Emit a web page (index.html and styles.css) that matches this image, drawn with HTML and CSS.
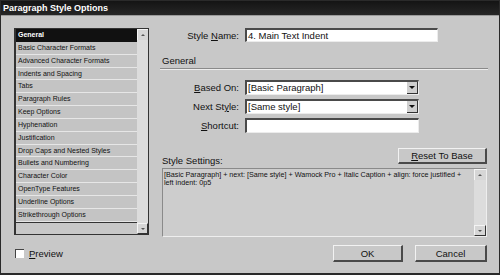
FILE: index.html
```html
<!DOCTYPE html>
<html lang="en">
  <head>
    <meta charset="UTF-8" />
    <title>Paragraph Style Options</title>
    <link rel="stylesheet" href="styles.css">
  </head>
  <body>
    <div class="window">
      <div class="titlebar">Paragraph Style Options</div>

      <div class="dialog">
        <div class="sidebar">
          <div class="listbox">
            <ul class="categories">
              <li class="selected">General</li>
              <li>Basic Character Formats</li>
              <li>Advanced Character Formats</li>
              <li>Indents and Spacing</li>
              <li>Tabs</li>
              <li>Paragraph Rules</li>
              <li>Keep Options</li>
              <li>Hyphenation</li>
              <li>Justification</li>
              <li>Drop Caps and Nested Styles</li>
              <li>Bullets and Numbering</li>
              <li>Character Color</li>
              <li>OpenType Features</li>
              <li>Underline Options</li>
              <li>Strikethrough Options</li>
            </ul>
            <div class="scrollbar">
              <span class="arrow up"></span>
              <span class="track"></span>
              <span class="arrow down"></span>
            </div>
          </div>

          <label class="preview">
            <span class="checkbox"></span>
            <span><u>P</u>review</span>
          </label>
        </div>

        <div class="panel">
          <div class="fields name-row">
            <label>Style <u>N</u>ame:</label>
            <div class="field name-field">4. Main Text Indent</div>
          </div>

          <div class="section">General</div>

          <div class="fields">
            <label><u>B</u>ased On:</label>
            <div class="field select">
              <span class="value">[Basic Paragraph]</span>
              <span class="drop"></span>
            </div>

            <label>Next St<u>y</u>le:</label>
            <div class="field select">
              <span class="value">[Same style]</span>
              <span class="drop"></span>
            </div>

            <label><u>S</u>hortcut:</label>
            <div class="field shortcut"></div>
          </div>

          <div class="settings-head">
            <span class="settings-label">Style Settings:</span>
            <button class="btn reset"><u>R</u>eset To Base</button>
          </div>

          <div class="settings-box">
            <p class="settings-text">[Basic Paragraph] + next: [Same style] + Wamock Pro + Italic Caption + align: force justified +<br>left indent: 0p5</p>
            <div class="scrollbar">
              <span class="arrow up"></span>
              <span class="track"></span>
              <span class="arrow down"></span>
            </div>
          </div>

          <div class="actions">
            <button class="btn ok">OK</button>
            <button class="btn cancel">Cancel</button>
          </div>
        </div>
      </div>
    </div>
  </body>
</html>
```

FILE: styles.css
```css
:root {
  --face: #c8c8c8;
  --dark: #1a1a1a;
  --shadow: #4a4a4a;
  --light: #ececec;
}

* {
  box-sizing: border-box;
}

body {
  margin: 0;
  background: var(--face);
  font-family: "Liberation Sans", Arial, sans-serif;
  color: #111;
}

.window {
  width: 500px;
  height: 275px;
  border: 1px solid #2a2a2a;
  border-bottom-width: 2px;
  background: var(--face);
}

.titlebar {
  height: 15px;
  padding-left: 2px;
  background: linear-gradient(#141414, #262626);
  color: #fff;
  font-weight: bold;
  font-size: 9px;
  line-height: 15px;
  border-bottom: 1px solid #9a9a9a;
}

.dialog {
  display: flex;
  gap: 11px;
  padding: 12px 0 0 13px;
}

/* left column */

.sidebar {
  width: 135px;
}

.listbox {
  display: flex;
  height: 207px;
  border: 1px solid #333;
  border-left-width: 2px;
  background: var(--face);
}

.categories {
  flex: 1;
  margin: 0;
  padding: 0;
  list-style: none;
  align-self: flex-start;
  border-bottom: 1px solid #333;
}

.categories li {
  height: 12.857px;
  padding-left: 2px;
  background: #c4c4c4;
  border-bottom: 1px solid #e6e6e6;
  font-size: 7px;
  line-height: 12px;
  white-space: nowrap;
}

.categories li.selected {
  background: #111;
  color: #fff;
  font-weight: bold;
  border-bottom-color: #111;
}

.scrollbar {
  display: flex;
  flex-direction: column;
  width: 11px;
  background: #dcdcdc;
}

.scrollbar .track {
  flex: 1;
}

.arrow {
  position: relative;
  height: 11px;
  background: #d6d6d6;
  border-top: 1px solid #f4f4f4;
  border-left: 1px solid #f4f4f4;
}

.arrow.down {
  border-right: 1px solid #333;
  border-bottom: 1px solid #333;
}

.arrow::after {
  content: "";
  position: absolute;
  left: 3px;
  top: 4px;
  border-left: 2px solid transparent;
  border-right: 2px solid transparent;
}

.arrow.up::after {
  border-bottom: 2px solid #555;
}

.arrow.down::after {
  border-top: 2px solid #555;
}

.preview {
  display: flex;
  align-items: center;
  gap: 5px;
  margin-top: 13px;
  margin-left: 1px;
  font-size: 9.5px;
}

.checkbox {
  width: 9px;
  height: 9px;
  background: #fff;
  border-top: 1px solid #444;
  border-left: 1px solid #444;
}

/* right column */

.panel {
  width: 328px;
}

.fields {
  display: grid;
  grid-template-columns: 79px auto;
  column-gap: 6px;
  row-gap: 4px;
  align-items: center;
  font-size: 9.5px;
}

.fields label {
  text-align: right;
}

.field {
  height: 15px;
  background: #fff;
  border-top: 2px solid var(--shadow);
  border-left: 2px solid var(--shadow);
  border-right: 1px solid var(--light);
  border-bottom: 1px solid var(--light);
  padding-left: 1px;
  line-height: 12px;
  white-space: nowrap;
}

.name-field {
  width: 193px;
  height: 14px;
}

.select,
.shortcut {
  width: 174px;
}

.select {
  display: flex;
  justify-content: space-between;
}

.drop {
  position: relative;
  width: 11px;
  height: 12px;
  background: #cfcfcf;
  border-right: 1px solid #333;
  border-bottom: 1px solid #333;
}

.drop::after {
  content: "";
  position: absolute;
  left: 2px;
  top: 4px;
  border-left: 3px solid transparent;
  border-right: 3px solid transparent;
  border-top: 3px solid #111;
}

.section {
  margin-top: 13px;
  padding: 0 0 1px 2px;
  font-size: 9.5px;
  line-height: 12px;
  border-bottom: 1px solid #8a8a8a;
  box-shadow: 0 1px 0 #ededed;
  margin-bottom: 11px;
}

.settings-head {
  display: flex;
  justify-content: space-between;
  align-items: flex-end;
  margin-top: 15px;
  margin-right: 1px;
}

.settings-label {
  padding-left: 2px;
  font-size: 9.5px;
  line-height: 11px;
  margin-bottom: -2px;
}

.btn {
  height: 16px;
  padding: 0;
  background: var(--face);
  border-top: 1px solid #f2f2f2;
  border-left: 1px solid #f2f2f2;
  border-right: 2px solid #4a4a4a;
  border-bottom: 2px solid #4a4a4a;
  font-family: "Liberation Sans", Arial, sans-serif;
  font-size: 9.5px;
  color: #111;
}

.reset {
  width: 89px;
}

.settings-box {
  display: flex;
  height: 69px;
  margin: 4px 1px 0 2px;
  background: #cdcdcd;
  border: 1px solid #8a8a8a;
  border-right-color: #eee;
  border-bottom-color: #eee;
}

.settings-text {
  flex: 1;
  margin: 0;
  padding: 2px 1px;
  font-size: 7.2px;
  line-height: 8px;
  white-space: nowrap;
}

.settings-box .scrollbar {
  width: 12px;
}

.actions {
  display: flex;
  justify-content: flex-end;
  gap: 12px;
  margin: 8px 1px 0 0;
}

.ok {
  width: 70px;
  height: 17px;
}

.cancel {
  width: 72px;
  height: 17px;
}
```
